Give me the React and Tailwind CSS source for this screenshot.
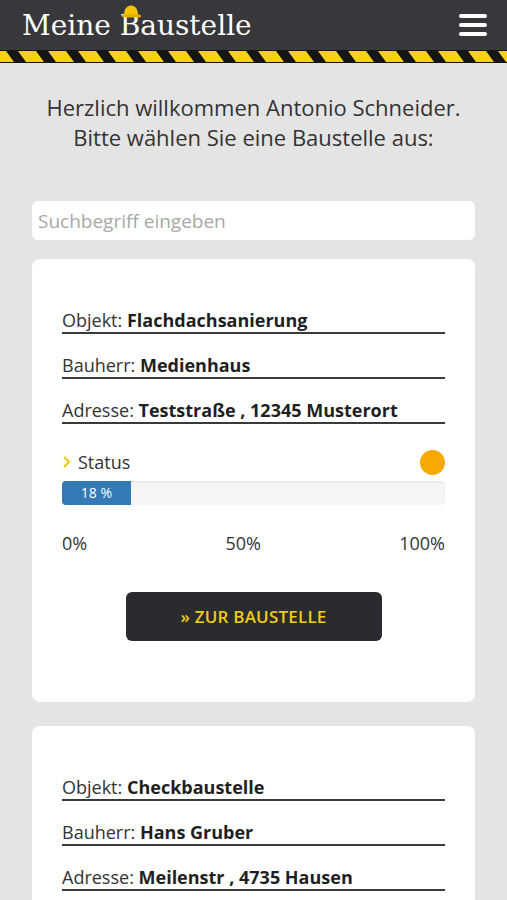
import React from 'react';

const sites = [
  { objekt: 'Flachdachsanierung', bauherr: 'Medienhaus', adresse: 'Teststraße , 12345 Musterort', progress: 18 },
  { objekt: 'Checkbaustelle', bauherr: 'Hans Gruber', adresse: 'Meilenstr , 4735 Hausen', progress: 42 },
];

function Helmet() {
  return (
    <svg width="20" height="15" viewBox="0 0 20 15" className="absolute left-[121px] top-[4px]">
      <path d="M3 11 C3 5 6 1.5 10 1.5 C14 1.5 17 5 17 11 Z" fill="#f5c400" />
      <rect x="1" y="10.5" width="19" height="3" rx="1.5" fill="#e8b000" />
    </svg>
  );
}

function HazardStripe() {
  return (
    <svg width="100%" height="13" className="block">
      <defs>
        <pattern id="hazard" width="30" height="13" patternUnits="userSpaceOnUse" x="-13">
          <rect width="30" height="13" fill="#151515" />
          <polygon points="1,1 19,1 27,12 9,12" fill="#f7d117" />
        </pattern>
      </defs>
      <rect width="100%" height="13" fill="url(#hazard)" />
    </svg>
  );
}

function Field({ label, value }) {
  return (
    <div className="border-b-2 border-[#3a3a3a] pb-px text-[18px] leading-[22px] text-[#333]">
      {label}: <span className="font-bold text-[#1f1f1f]">{value}</span>
    </div>
  );
}

function SiteCard({ site }) {
  return (
    <div className="bg-white rounded-lg px-[30px] pt-[50px] pb-[61px]">
      <div className="flex flex-col gap-[20px]">
        <Field label="Objekt" value={site.objekt} />
        <Field label="Bauherr" value={site.bauherr} />
        <Field label="Adresse" value={site.adresse} />
      </div>
      <div className="mt-[26px] h-[24px] flex items-center justify-between">
        <div className="flex items-center gap-[7px] text-[18px] leading-[24px] text-[#333]">
          <svg width="9" height="14" viewBox="0 0 9 14">
            <path d="M2 2 L7 7 L2 12" fill="none" stroke="#f5c400" strokeWidth="2" />
          </svg>
          Status
        </div>
        <div className="w-[25px] h-[25px] rounded-full bg-[#f9a800]" />
      </div>
      <div className="mt-[7px] h-[24px] rounded bg-[#f5f5f5] overflow-hidden shadow-[inset_0_1px_2px_rgba(0,0,0,0.08)]">
        <div className="h-full bg-[#337ab7] text-white text-[14px] leading-[24px] text-center" style={{ width: `${site.progress}%` }}>
          {site.progress} %
        </div>
      </div>
      <div className="mt-[26px] flex justify-between text-[18px] leading-[24px] text-[#333]">
        <span>0%</span>
        <span>50%</span>
        <span>100%</span>
      </div>
      <div className="mt-[37px] flex justify-center">
        <button className="w-[256px] h-[49px] rounded-md bg-[#2a2b2e] text-[#f0cd12] text-[17px] leading-[24px] font-semibold tracking-[0.2px]">
          » ZUR BAUSTELLE
        </button>
      </div>
    </div>
  );
}

export default function App() {
  return (
    <div className="min-h-[900px] bg-[#e4e4e4] font-['Open_Sans',sans-serif]">
      <header className="bg-[#38383c]">
        <div className="relative h-[50px] flex items-center justify-between pl-[22px] pr-[20px]">
          <Helmet />
          <h1 className="font-['DejaVu_Serif',serif] text-white text-[28px] leading-none pt-[2px]">Meine Baustelle</h1>
          <div className="flex flex-col gap-[5px]">
            <span className="block w-[28px] h-[4px] rounded-sm bg-white" />
            <span className="block w-[28px] h-[4px] rounded-sm bg-white" />
            <span className="block w-[28px] h-[4px] rounded-sm bg-white" />
          </div>
        </div>
        <HazardStripe />
      </header>
      <p className="mt-[29px] text-center text-[22px] leading-[30px] text-[#333]">
        Herzlich willkommen Antonio Schneider.<br />
        Bitte wählen Sie eine Baustelle aus:
      </p>
      <div className="px-[32px] mt-[49px] flex flex-col gap-[24px] pb-[20px]">
        <input
          type="text"
          placeholder="Suchbegriff eingeben"
          className="-mb-[5px] h-[39px] rounded-md bg-white px-[6px] text-[19px] placeholder:text-[#a8a8a8] outline-none"
        />
        {sites.map((s) => (
          <SiteCard key={s.objekt} site={s} />
        ))}
      </div>
    </div>
  );
}
